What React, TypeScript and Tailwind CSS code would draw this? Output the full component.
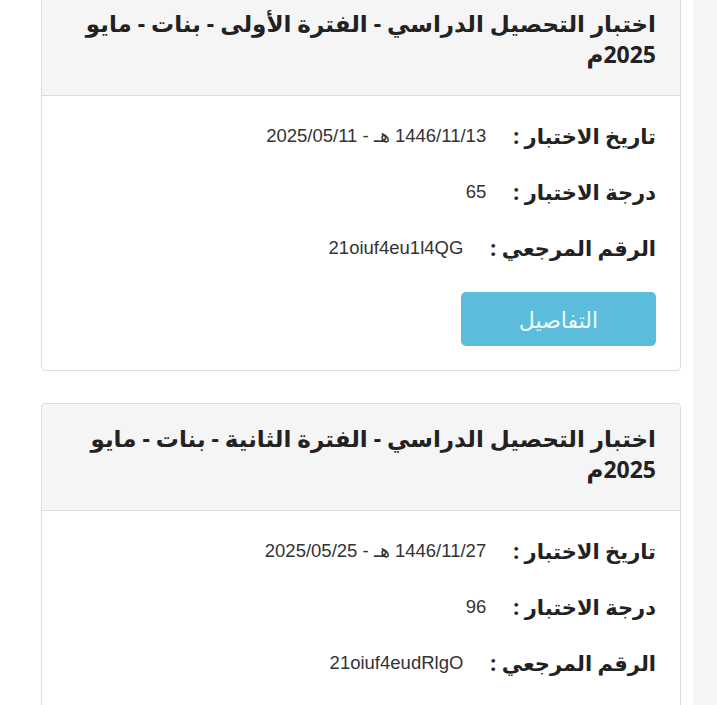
import React from 'react';

interface Exam {
  title: string;
  date: string;
  score: string;
  ref: string;
}

const exams: Exam[] = [
  {
    title: 'اختبار التحصيل الدراسي - الفترة الأولى - بنات - مايو 2025م',
    date: '1446/11/13 هـ - 2025/05/11',
    score: '65',
    ref: '21oiuf4eu1l4QG',
  },
  {
    title: 'اختبار التحصيل الدراسي - الفترة الثانية - بنات - مايو 2025م',
    date: '1446/11/27 هـ - 2025/05/25',
    score: '96',
    ref: '21oiuf4eudRlgO',
  },
];

const InfoRow: React.FC<{ label: string; value: string }> = ({ label, value }) => (
  <div className="flex h-[40px] items-center gap-[27px]">
    <span className="font-['Noto_Sans','DejaVu_Sans',sans-serif] text-[21px] font-bold leading-[40px] text-[#222]">
      {label} :
    </span>
    <span className="pt-[1px] font-['Liberation_Sans',sans-serif] text-[18.5px] leading-none text-[#333]">
      {value}
    </span>
  </div>
);

const ExamCard: React.FC<{ exam: Exam }> = ({ exam }) => (
  <div className="shrink-0 overflow-hidden rounded-[4px] border border-[#dcdcdc] bg-white">
    <div className="border-b border-[#dcdcdc] bg-[#f5f5f5] px-[24px] pb-[25px] pt-[19px]">
      <h3 className="font-['Noto_Sans','DejaVu_Sans',sans-serif] text-[23px] font-bold leading-[31px] text-[#222]">
        {exam.title}
      </h3>
    </div>
    <div className="flex flex-col px-[24px] pb-[24px] pt-[20px]">
      <div className="flex flex-col gap-4">
        <InfoRow label="تاريخ الاختبار" value={exam.date} />
        <InfoRow label="درجة الاختبار" value={exam.score} />
        <InfoRow label="الرقم المرجعي" value={exam.ref} />
      </div>
      <div className="mt-[24px] flex">
        <button className="flex h-[54px] w-[195px] items-center justify-center rounded-[5px] bg-[#5bbddb] font-['Noto_Sans','DejaVu_Sans',sans-serif] text-[22px] text-[#eef9fc]">
          التفاصيل
        </button>
      </div>
    </div>
  </div>
);

export default function App() {
  return (
    <div dir="rtl" className="flex h-[705px] w-full overflow-hidden bg-white">
      <div className="w-[24px] shrink-0 bg-[#f6f6f6]" />
      <div className="mt-[-12px] flex flex-1 flex-col gap-[32px] pl-[41px] pr-[12px]">
        {exams.map((exam) => (
          <ExamCard key={exam.ref} exam={exam} />
        ))}
      </div>
    </div>
  );
}
